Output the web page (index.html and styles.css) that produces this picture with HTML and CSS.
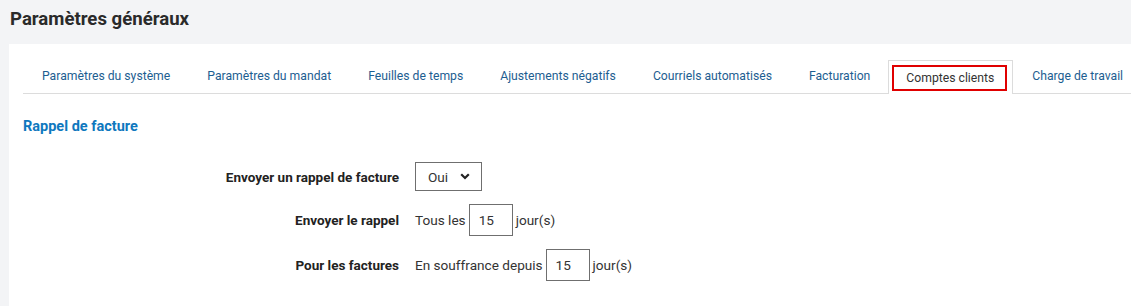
FILE: index.html
```html
<!DOCTYPE html>
<html lang="fr">
<head>
<meta charset="utf-8">
<title>Paramètres généraux</title>
<link rel="stylesheet" href="styles.css">
</head>
<body>
<h1 class="page-title">Paramètres généraux</h1>
<div class="panel">
  <nav class="tabs">
    <a class="tab">Paramètres du système</a>
    <a class="tab">Paramètres du mandat</a>
    <a class="tab">Feuilles de temps</a>
    <a class="tab">Ajustements négatifs</a>
    <a class="tab">Courriels automatisés</a>
    <a class="tab">Facturation</a>
    <a class="tab tab-active"><span class="tab-focus">Comptes clients</span></a>
    <a class="tab">Charge de travail</a>
  </nav>
  <h2 class="section-title">Rappel de facture</h2>
  <div class="form">
    <div class="label">Envoyer un rappel de facture</div>
    <div class="control">
      <div class="select"><span>Oui</span>
        <svg class="chev" width="10" height="7" viewBox="0 0 10 7"><path d="M1.2 1.2 L5 5 L8.8 1.2" fill="none" stroke="#222" stroke-width="2.2"/></svg>
      </div>
    </div>
    <div class="label">Envoyer le rappel</div>
    <div class="control">
      <span class="text">Tous les</span><span class="input">15</span><span class="text">jour(s)</span>
    </div>
    <div class="label">Pour les factures</div>
    <div class="control">
      <span class="text">En souffrance depuis</span><span class="input">15</span><span class="text">jour(s)</span>
    </div>
  </div>
</div>
</body>
</html>
```
FILE: styles.css
```css
html, body {
  margin: 0;
  padding: 0;
}
body {
  background: #f3f4f6;
  font-family: Roboto, "Liberation Sans", sans-serif;
  color: #222;
  overflow: hidden;
  width: 1131px;
  height: 306px;
}
.page-title {
  margin: 0;
  padding: 8px 10px 0;
  height: 36px;
  font-size: 18.6px;
  font-weight: 700;
  color: #2a2a2a;
  line-height: 22px;
}
.panel {
  margin-left: 9px;
  background: #fff;
  padding: 16px 0 0 14px;
  width: 1300px;
  height: 300px;
}
.tabs {
  display: flex;
  height: 33px;
  border-bottom: 1px solid #dcdcdc;
}
.tab {
  flex: none;
  box-sizing: border-box;
  height: 34px;
  padding: 0 17px 0 18px;
  border: 1px solid transparent;
  border-bottom: none;
  line-height: 31px;
  font-size: 12.2px;
  color: #1d5e91;
  white-space: nowrap;
}
.tab-active {
  background: #fff;
  border-color: #dcdcdc;
  padding: 4px 5px 0 3px;
  color: #333;
}
.tab-focus {
  display: block;
  border: 2px solid #e00000;
  padding: 0 11px 0 12px;
  line-height: 22px;
}
.section-title {
  margin: 24px 0 0;
  font-size: 14.5px;
  font-weight: 700;
  color: #0e78be;
  line-height: 17px;
}
.form {
  display: grid;
  grid-template-columns: 376px auto;
  column-gap: 16px;
  row-gap: 13px;
  margin-top: 27px;
  font-size: 13.6px;
}
.label {
  text-align: right;
  font-weight: 700;
  align-self: center;
  color: #222;
  font-size: 13.5px;
}
.control {
  display: flex;
  align-items: center;
  gap: 3px;
  color: #333;
  font-size: 13.6px;
}
.select {
  box-sizing: border-box;
  width: 67px;
  height: 29px;
  border: 1px solid #6f6f6f;
  display: flex;
  align-items: center;
  justify-content: space-between;
  padding: 0 11px 0 12px;
}
.chev {
  display: block;
}
.input {
  box-sizing: border-box;
  width: 44px;
  height: 32px;
  border: 1px solid #6f6f6f;
  padding-left: 9px;
  line-height: 30px;
}
```
